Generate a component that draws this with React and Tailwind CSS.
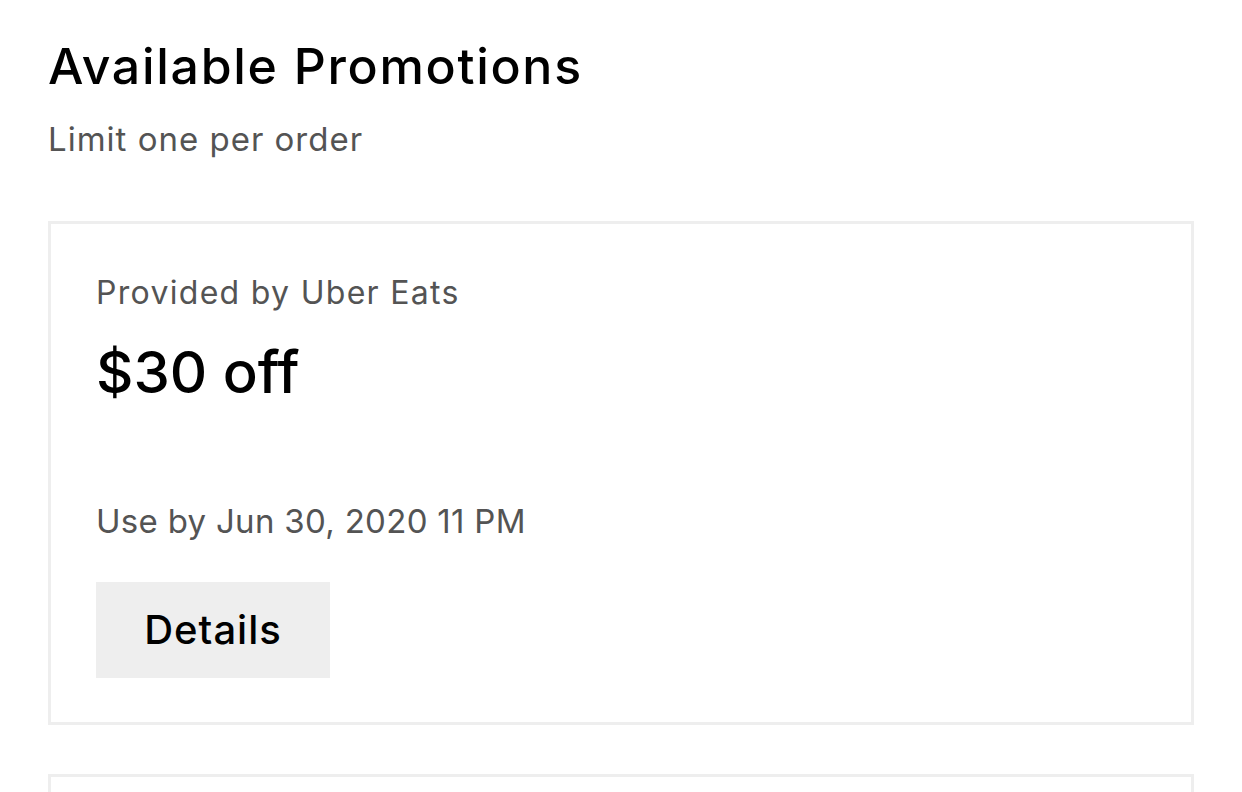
export default function App() {
  return (
    <div className="min-h-screen bg-white font-['Inter',sans-serif] text-black">
      <div className="px-[48px] pt-[41px]">
        <h1 className="text-[50px] leading-none font-medium tracking-[1.7px]">Available Promotions</h1>
        <p className="mt-[32px] text-[33px] leading-none tracking-[1px] text-[#545454]">Limit one per order</p>

        <div className="mt-[65px] flex flex-col gap-[49px]">
          <div className="border-[3px] border-[#eeeeee] px-[45px] pt-[53px] pb-[44px]">
            <p className="text-[32px] leading-none tracking-[1.3px] text-[#545454]">Provided by Uber Eats</p>
            <p className="mt-[34px] text-[58px] leading-none font-medium">$30 off</p>
            <p className="mt-[104px] text-[33px] leading-none tracking-[0.3px] text-[#545454]">Use by Jun 30, 2020 11 PM</p>
            <button className="mt-[44px] flex w-[234px] items-center justify-center bg-[#eeeeee] py-[28px] text-[40px] leading-none font-medium tracking-[1px]">
              Details
            </button>
          </div>
          <div className="h-[120px] border-[3px] border-[#eeeeee]" />
        </div>
      </div>
    </div>
  );
}
